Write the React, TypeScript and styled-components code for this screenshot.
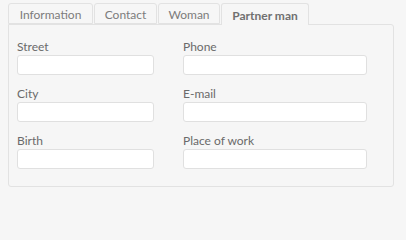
import React from "react";
import styled, { createGlobalStyle } from "styled-components";

const Global = createGlobalStyle`
  html, body { margin: 0; padding: 0; background: #f6f6f6; }
  body { font-family: "Lato", "Open Sans", sans-serif; }
`;

const Page = styled.div`
  padding: 3px 12px 0 8px;
  width: 406px;
  box-sizing: border-box;
`;

const TabBar = styled.div`
  display: flex;
  gap: 1px;
  height: 21px;
  position: relative;
  z-index: 1;
`;

const Tab = styled.div<{ $active?: boolean; $w: number }>`
  box-sizing: border-box;
  width: ${(p) => p.$w}px;
  height: ${(p) => (p.$active ? 22 : 21)}px;
  border: 1px solid #e2e2e2;
  border-bottom: ${(p) => (p.$active ? "none" : "1px solid #e2e2e2")};
  border-radius: 3px 3px 0 0;
  background: #f6f6f6;
  color: ${(p) => (p.$active ? "#707070" : "#7c7c7c")};
  font-weight: ${(p) => (p.$active ? 700 : 400)};
  font-size: 12px;
  display: flex;
  align-items: center;
  justify-content: center;
  padding-top: 1px;
`;

const Panel = styled.div`
  box-sizing: border-box;
  border: 1px solid #e2e2e2;
  border-radius: 0 3px 3px 3px;
  background: #f6f6f6;
  height: 163px;
  padding: 14px 0 0 8px;
  display: grid;
  grid-template-columns: 137px 184px;
  column-gap: 29px;
  row-gap: 11px;
  align-content: start;
`;

const Field = styled.div`
  display: flex;
  flex-direction: column;
  gap: 1px;
`;

const Label = styled.label`
  font-size: 12px;
  line-height: 15px;
  color: #6a6a6a;
`;

const Input = styled.input`
  box-sizing: border-box;
  height: 20px;
  width: 100%;
  border: 1px solid #e0e0e0;
  border-radius: 3px;
  background: #ffffff;
  margin: 0;
  padding: 0 4px;
  outline: none;
`;

const tabs = [
  { t: "Information", w: 85 },
  { t: "Contact", w: 63 },
  { t: "Woman", w: 62 },
  { t: "Partner man", w: 88, active: true },
];

const fields = ["Street", "Phone", "City", "E-mail", "Birth", "Place of work"];

export default function App() {
  return (
    <>
      <Global />
      <Page>
        <TabBar>
          {tabs.map((x) => (
            <Tab key={x.t} $w={x.w} $active={x.active}>
              {x.t}
            </Tab>
          ))}
        </TabBar>
        <Panel>
          {fields.map((f) => (
            <Field key={f}>
              <Label>{f}</Label>
              <Input />
            </Field>
          ))}
        </Panel>
      </Page>
    </>
  );
}
